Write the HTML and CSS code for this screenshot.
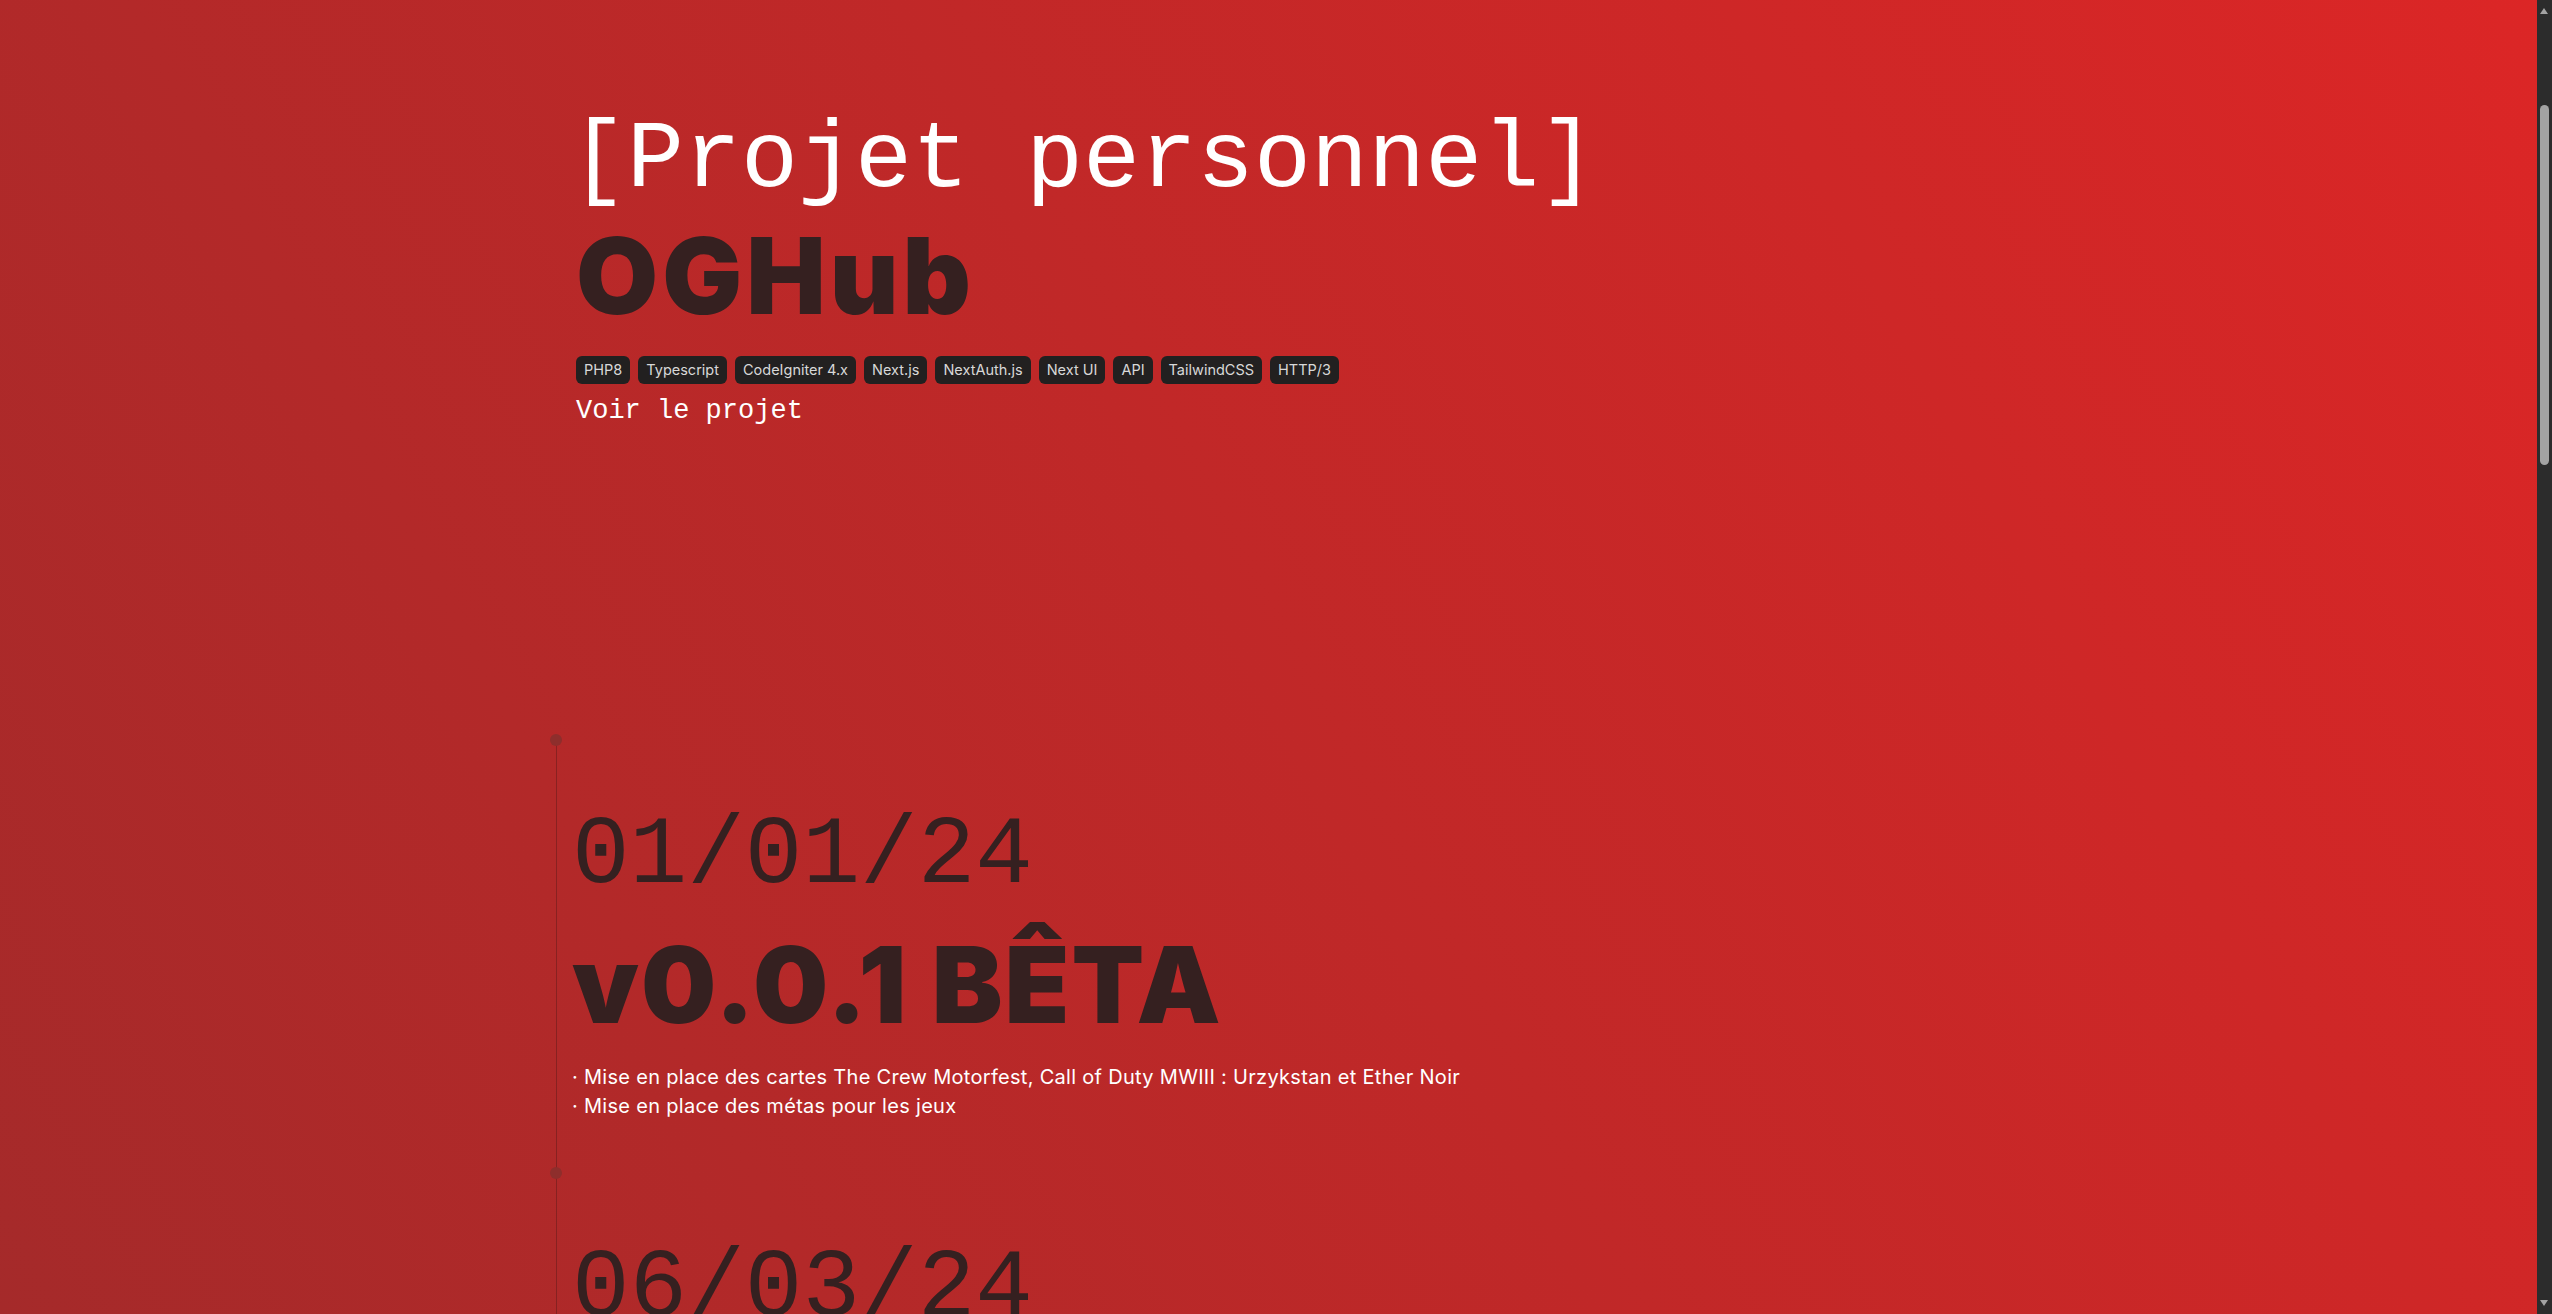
FILE: index.html
```html
<!DOCTYPE html>
<html lang="fr">
<head>
<meta charset="utf-8">
<title>OGHub</title>
<link rel="stylesheet" href="styles.css">
</head>
<body>
<main class="page">
  <header class="hero">
    <h1 class="kicker">[Projet personnel]</h1>
    <h2 class="project">OGHub</h2>
    <ul class="tags">
      <li class="tag">PHP8</li>
      <li class="tag">Typescript</li>
      <li class="tag">CodeIgniter 4.x</li>
      <li class="tag">Next.js</li>
      <li class="tag">NextAuth.js</li>
      <li class="tag">Next UI</li>
      <li class="tag">API</li>
      <li class="tag">TailwindCSS</li>
      <li class="tag">HTTP/3</li>
    </ul>
    <a class="link" href="#">Voir le projet</a>
  </header>

  <section class="timeline">
    <article class="entry">
      <span class="dot"></span>
      <p class="date">01/01/24</p>
      <h3 class="version">v0.0.1 BÊTA</h3>
      <ul class="notes">
        <li>· Mise en place des cartes The Crew Motorfest, Call of Duty MWIII : Urzykstan et Ether Noir</li>
        <li>· Mise en place des métas pour les jeux</li>
      </ul>
    </article>
    <article class="entry">
      <span class="dot"></span>
      <p class="date">06/03/24</p>
      <h3 class="version">v0.0.2 BÊTA</h3>
      <ul class="notes">
        <li>· Ajout de nouvelles cartes</li>
        <li>· Corrections de bugs</li>
      </ul>
    </article>
    <article class="entry">
      <span class="dot"></span>
      <p class="date">15/04/24</p>
      <h3 class="version">v0.0.3 BÊTA</h3>
      <ul class="notes">
        <li>· Améliorations de l'interface</li>
      </ul>
    </article>
    <article class="entry">
      <span class="dot"></span>
      <p class="date">20/05/24</p>
      <h3 class="version">v0.1.0</h3>
      <ul class="notes">
        <li>· Optimisation des performances</li>
      </ul>
    </article>
    <article class="entry">
      <span class="dot"></span>
      <p class="date">01/07/24</p>
      <h3 class="version">v0.2.0</h3>
      <ul class="notes">
        <li>· Nouvelles fonctionnalités</li>
      </ul>
    </article>
    <article class="entry">
      <span class="dot"></span>
      <p class="date">01/09/24</p>
      <h3 class="version">v0.3.0</h3>
      <ul class="notes">
        <li>· Mises à jour diverses</li>
      </ul>
    </article>
  </section>
</main>

<div class="scrollbar" aria-hidden="true">
  <span class="scroll-arrow scroll-up"></span>
  <span class="scroll-thumb"></span>
  <span class="scroll-arrow scroll-down"></span>
</div>
</body>
</html>
```

FILE: styles.css
```css
html {
  color-scheme: dark;
}

body {
  margin: 0;
  min-height: 100vh;
  background: linear-gradient(62deg, #a52a2a 0%, #dc2626 100%) fixed;
  color: #ffffff;
  font-family: "Inter", "Liberation Sans", sans-serif;
}

.page {
  padding: 0 0 200px 556px;
}

.hero {
  margin-left: 20px;
  padding-top: 104px;
  height: 647px;
  box-sizing: border-box;
}

.kicker {
  margin: 0;
  font-family: "Liberation Mono", monospace;
  font-weight: 400;
  font-size: 95px;
  line-height: 1.2;
  color: #ffffff;
  margin-left: -6px;
}

.project {
  margin: 0;
  font-family: "Inter", sans-serif;
  font-weight: 900;
  font-size: 106px;
  line-height: 1.1;
  letter-spacing: 4px;
  color: #352020;
}

.tags {
  list-style: none;
  margin: 21px 0 0;
  padding: 0;
  display: flex;
  flex-wrap: wrap;
  gap: 8px;
}

.tag {
  background: #222020;
  color: #d8d8d8;
  font-size: 14.5px;
  line-height: 28px;
  padding: 0 8px;
  border-radius: 6px;
}

.link {
  display: inline-block;
  margin-top: 12px;
  font-family: "Liberation Mono", monospace;
  font-size: 27px;
  color: #ffffff;
  text-decoration: none;
}

.timeline {
  border-left: 1px solid rgba(60, 20, 20, 0.35);
  padding-left: 15px;
  margin-top: 93px;
}

.entry {
  position: relative;
  padding-top: 59px;
  height: 433px;
  box-sizing: border-box;
}

.dot {
  position: absolute;
  left: -22px;
  top: -6px;
  width: 12px;
  height: 12px;
  border-radius: 50%;
  background: #8e2e2c;
}

.date {
  margin: 0 0 7px;
  font-family: "Liberation Mono", monospace;
  font-size: 96px;
  line-height: 1.2;
  color: #352020;
}

.version {
  margin: 0;
  font-family: "Inter", sans-serif;
  font-weight: 900;
  font-size: 106px;
  line-height: 1.2;
  letter-spacing: 2px;
  color: #352020;
}

.notes {
  list-style: none;
  margin: 15px 0 0;
  padding: 0;
  font-size: 20px;
  letter-spacing: 0.3px;
  line-height: 29px;
  color: #ffffff;
}

.scrollbar {
  position: fixed;
  top: 0;
  right: 0;
  bottom: 0;
  width: 15px;
  background: #2c2c2c;
}

.scroll-thumb {
  position: absolute;
  top: 105px;
  left: 3px;
  width: 9px;
  height: 360px;
  border-radius: 5px;
  background: #a3a3a3;
}

.scroll-arrow {
  position: absolute;
  left: 3px;
  width: 0;
  height: 0;
  border-left: 4.5px solid transparent;
  border-right: 4.5px solid transparent;
}

.scroll-up {
  top: 8px;
  border-bottom: 6px solid #a3a3a3;
}

.scroll-down {
  bottom: 8px;
  border-top: 6px solid #a3a3a3;
}
```
